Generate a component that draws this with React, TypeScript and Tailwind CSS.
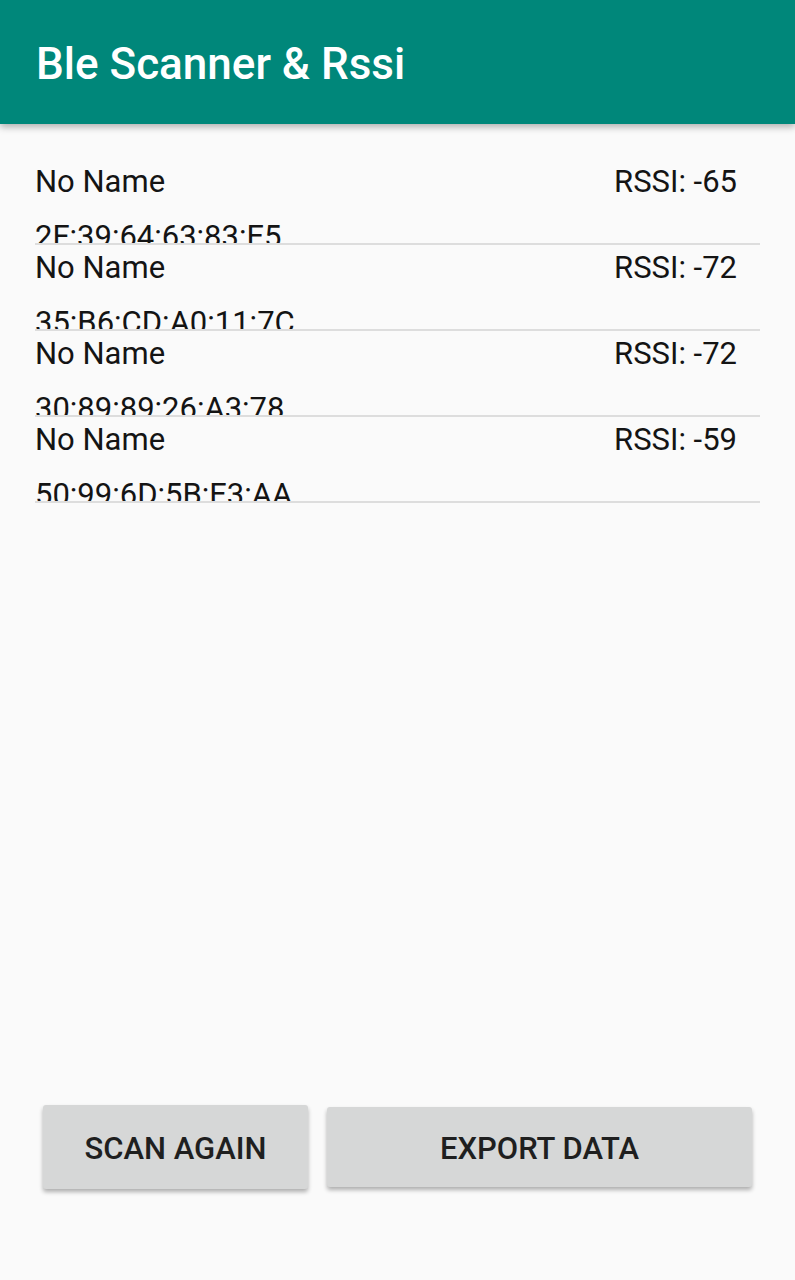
const devices = [
  { name: "No Name", mac: "2F:39:64:63:83:E5", rssi: -65 },
  { name: "No Name", mac: "35:B6:CD:A0:11:7C", rssi: -72 },
  { name: "No Name", mac: "30:89:89:26:A3:78", rssi: -72 },
  { name: "No Name", mac: "50:99:6D:5B:E3:AA", rssi: -59 },
];

function DeviceRow({ name, mac, rssi }: { name: string; mac: string; rssi: number }) {
  return (
    <li className="mx-[35px] h-[86px] overflow-hidden border-b-2 border-[#dddddd]">
      <div className="flex justify-between pt-[5px] pr-[23px]">
        <span>{name}</span>
        <span>RSSI: {rssi}</span>
      </div>
      <div className="mt-[19px]">{mac}</div>
    </li>
  );
}

export default function App() {
  return (
    <div
      className="flex h-[1280px] flex-col bg-[#fafafa] text-[#141414]"
      style={{ fontFamily: "Roboto, 'Liberation Sans', sans-serif" }}
    >
      <header className="relative z-10 flex h-[124px] items-center bg-[#00877a] px-[36px] pt-[4px] shadow-[0_3px_7px_rgba(0,0,0,0.3)]">
        <h1 className="text-[44px] font-medium text-white">Ble Scanner &amp; Rssi</h1>
      </header>

      <ul className="mt-[35px] flex-1 text-[31px] leading-[36px]">
        {devices.map((d) => (
          <DeviceRow key={d.mac} {...d} />
        ))}
      </ul>

      <div className="mb-[91px] flex items-start gap-[19px] pl-[43px]">
        <button className="h-[84px] w-[265px] rounded-[3px] bg-[#d6d7d7] pt-[4px] text-[31px] font-medium text-[#1f1f1f] shadow-[0_3px_4px_rgba(0,0,0,0.3)]">
          SCAN AGAIN
        </button>
        <button className="mt-[2px] h-[80px] w-[425px] rounded-[3px] bg-[#d6d7d7] pt-[4px] text-[31px] font-medium text-[#1f1f1f] shadow-[0_3px_4px_rgba(0,0,0,0.3)]">
          EXPORT DATA
        </button>
      </div>
    </div>
  );
}
